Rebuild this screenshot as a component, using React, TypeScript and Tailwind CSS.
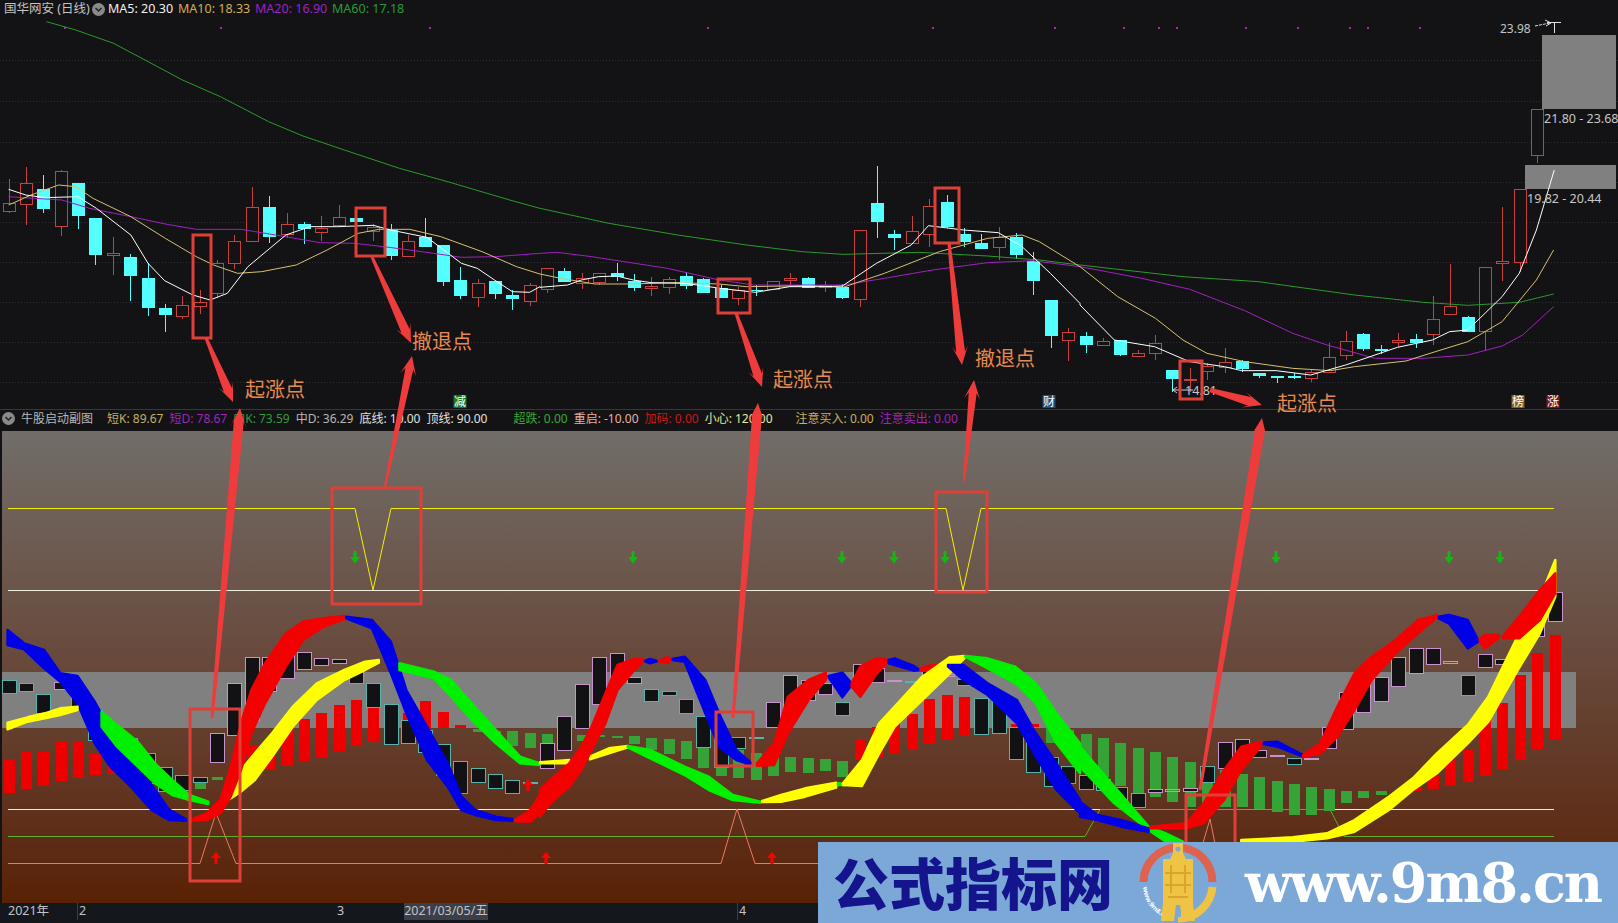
import React from "react";

type Pt = [number, number];
type Rib = [number, number, number];

// crop coordinates -> page coordinates, the three read-outs of the chart
const cropA = (x: number, y: number): Pt => [x / 2.904, y / 3];
const cropB = (x: number, y: number): Pt => [540 + x / 2.904, y / 3];
const cropC = (x: number, y: number): Pt => [1080 + x / 2.914, y / 3];
const lowA = (x: number, y: number): Pt => [x / 2.904, 600 + y / 3];
const lowB = (x: number, y: number): Pt => [540 + x / 2.904, 600 + y / 3];
const lowC = (x: number, y: number): Pt => [1080 + x / 2.914, 540 + y / 3];

const cx = (i: number) => Math.round(8.6 + 17.37 * i) + 0.5;

const line3 = (a: number[][], b: number[][], c: number[][]) =>
  [...a.map((p) => cropA(p[0], p[1])), ...b.map((p) => cropB(p[0], p[1])), ...c.map((p) => cropC(p[0], p[1]))]
    .map((p) => p.join(","))
    .join(" ");

const ma60 = line3(
  [[135, 65], [220, 90], [330, 130], [430, 185], [530, 240], [640, 290], [780, 365], [880, 408], [1000, 450], [1160, 505], [1300, 545], [1480, 600], [1568, 625]],
  [[0, 625], [200, 670], [400, 705], [600, 735], [760, 755], [880, 763], [1100, 757], [1300, 768], [1450, 780], [1568, 795]],
  [[0, 795], [300, 830], [520, 845], [800, 885], [1000, 907], [1130, 916], [1280, 907], [1380, 882]]
);
const ma20 = line3(
  [[25, 590], [100, 595], [180, 600], [260, 625], [380, 650], [480, 672], [570, 688], [700, 688], [800, 705], [930, 728], [1030, 730], [1130, 742], [1260, 760], [1340, 772], [1440, 770], [1568, 760]],
  [[0, 760], [50, 757], [150, 770], [370, 805], [520, 840], [620, 855], [880, 855], [1000, 835], [1140, 810], [1300, 788], [1430, 782], [1568, 800]],
  [[0, 800], [180, 835], [320, 868], [480, 932], [620, 1000], [720, 1035], [860, 1075], [1000, 1075], [1130, 1065], [1230, 1038], [1290, 1005], [1380, 920]]
);
const ma10 = line3(
  [[25, 615], [90, 585], [170, 555], [220, 560], [270, 595], [380, 650], [480, 715], [570, 770], [620, 795], [690, 820], [760, 815], [860, 795], [950, 750], [1040, 700], [1100, 688], [1190, 688], [1280, 710], [1400, 755], [1500, 800], [1568, 822]],
  [[0, 822], [60, 835], [160, 852], [250, 852], [400, 848], [520, 852], [600, 860], [780, 857], [880, 862], [1000, 820], [1160, 755], [1300, 715], [1400, 705], [1450, 725], [1568, 800]],
  [[0, 800], [110, 890], [220, 955], [300, 1020], [370, 1060], [480, 1085], [620, 1105], [730, 1112], [800, 1100], [950, 1083], [1020, 1060], [1130, 1025], [1230, 965], [1330, 840], [1380, 750]]
);
const ma5 = line3(
  [[25, 568], [75, 585], [130, 593], [226, 590], [280, 625], [380, 705], [430, 790], [478, 842], [560, 885], [610, 900], [660, 880], [720, 800], [830, 705], [900, 680], [980, 680], [1084, 676], [1134, 690], [1240, 712], [1340, 790], [1386, 805], [1436, 840], [1488, 875], [1538, 877], [1568, 860]],
  [[0, 862], [80, 855], [120, 840], [170, 830], [222, 828], [271, 840], [323, 848], [423, 850], [524, 865], [625, 877], [725, 860], [826, 860], [878, 858], [977, 790], [1078, 735], [1128, 677], [1230, 690], [1331, 698], [1400, 740], [1482, 820], [1568, 910]],
  [[0, 915], [100, 1020], [217, 1040], [319, 1085], [421, 1100], [471, 1112], [572, 1112], [672, 1125], [774, 1095], [925, 1042], [1027, 1020], [1077, 995], [1130, 990], [1230, 890], [1280, 820], [1330, 690], [1382, 510]]
);

// hi, body top, body bottom, lo, 1 = red
const candles: number[][] = [
  [179, 203, 211, 213, 1], [167, 183, 204, 225, 1], [175, 189, 209, 213, 0], [170, 171, 226, 236, 1], [183, 183, 216, 229, 0],
  [218, 218, 255, 265, 0], [237, 253, 255, 275, 1], [254, 257, 276, 301, 0], [263, 278, 308, 316, 0], [304, 308, 315, 332, 0],
  [296, 305, 316, 319, 1], [290, 302, 306, 314, 1], [260, 263, 293, 298, 1], [235, 241, 263, 269, 1], [187, 207, 241, 241, 1],
  [196, 207, 237, 243, 0], [213, 224, 234, 238, 1], [222, 224, 229, 244, 0], [216, 228, 232, 241, 1], [205, 217, 225, 225, 1],
  [217, 218, 222, 222, 0], [224, 227, 231, 241, 1], [224, 230, 256, 260, 0], [235, 241, 256, 256, 1], [218, 237, 247, 247, 0],
  [245, 245, 282, 286, 0], [267, 280, 296, 299, 0], [279, 283, 297, 307, 1], [281, 281, 294, 299, 0], [290, 295, 299, 310, 0],
  [283, 285, 301, 306, 1], [268, 268, 289, 293, 1], [268, 271, 282, 282, 0], [273, 278, 283, 289, 1], [273, 273, 282, 285, 1],
  [263, 273, 277, 281, 0], [274, 281, 288, 291, 0], [277, 286, 288, 296, 1], [277, 279, 287, 294, 1], [272, 276, 286, 289, 0],
  [278, 279, 293, 293, 0], [285, 288, 298, 298, 0], [287, 290, 298, 305, 1], [285, 290, 291, 296, 0], [281, 281, 289, 289, 1],
  [273, 278, 280, 286, 1], [277, 278, 288, 288, 0], [281, 285, 287, 292, 1], [284, 287, 298, 299, 0], [230, 230, 299, 307, 1],
  [166, 203, 222, 238, 0], [230, 234, 238, 250, 0], [216, 231, 243, 243, 1], [199, 206, 234, 247, 1], [195, 202, 227, 228, 0],
  [228, 234, 242, 247, 0], [234, 243, 249, 249, 0], [227, 237, 247, 260, 1], [233, 237, 255, 259, 0], [252, 261, 281, 295, 0],
  [300, 300, 336, 348, 0], [328, 332, 340, 361, 1], [332, 336, 345, 353, 0], [338, 341, 345, 345, 1], [340, 340, 355, 356, 0],
  [350, 353, 356, 356, 1], [335, 343, 353, 360, 1], [370, 370, 379, 392, 0], [368, 379, 380, 392, 1], [363, 366, 371, 380, 1],
  [348, 362, 367, 373, 1], [360, 361, 369, 372, 0], [373, 373, 376, 378, 0], [376, 376, 378, 383, 0], [373, 376, 378, 379, 0],
  [369, 372, 378, 382, 1], [343, 357, 372, 372, 1], [331, 341, 355, 360, 1], [333, 334, 349, 351, 0], [345, 349, 351, 354, 0],
  [333, 340, 342, 347, 1], [334, 339, 343, 348, 0], [296, 319, 334, 345, 1], [264, 306, 314, 314, 1], [316, 317, 332, 332, 0],
  [267, 267, 331, 351, 1], [207, 261, 263, 281, 1], [189, 189, 262, 272, 1], [109, 109, 155, 163, 1],
];

const gridY = [60, 101, 142, 182, 222, 262, 302, 342, 382];
const dots = [64, 220, 429, 707, 932, 1054, 1123, 1158, 1176, 1245, 1297, 1349, 1367, 1419];

// index, top, bottom, 1 = pink
const subCandles: number[][] = [
  [0, 680, 693, 0], [1, 683, 691, 0], [2, 694, 713, 0], [3, 682, 689, 1], [4, 695, 707, 0], [5, 710, 740, 0], [6, 730, 747, 0], [7, 738, 764, 0],
  [8, 753, 783, 0], [9, 767, 791, 0], [10, 775, 790, 0], [11, 777, 782, 0], [12, 733, 762, 1], [13, 683, 735, 1], [14, 657, 720, 1], [15, 657, 691, 1],
  [16, 652, 678, 1], [17, 652, 669, 1], [18, 658, 665, 1], [19, 659, 663, 1], [20, 671, 683, 0], [21, 683, 707, 0], [22, 704, 744, 0], [23, 720, 743, 0],
  [24, 730, 752, 0], [25, 744, 775, 0], [26, 761, 793, 0], [27, 768, 782, 0], [28, 774, 788, 0], [29, 780, 793, 0], [30, 782, 783, 0], [31, 743, 768, 1],
  [32, 716, 750, 1], [33, 684, 728, 1], [34, 657, 704, 1], [35, 653, 680, 1], [36, 677, 683, 1], [37, 689, 701, 0], [38, 691, 695, 0], [39, 699, 713, 0],
  [40, 716, 747, 0], [41, 733, 767, 0], [42, 737, 748, 0], [43, 737, 738, 0], [44, 702, 727, 1], [45, 675, 707, 1], [46, 680, 700, 1], [47, 683, 694, 1],
  [48, 702, 715, 0], [49, 664, 688, 1], [50, 668, 682, 1], [51, 680, 681, 1], [52, 681, 682, 0], [53, 669, 675, 1], [54, 674, 676, 1], [55, 679, 685, 0],
  [56, 698, 734, 0], [57, 701, 733, 0], [58, 727, 759, 0], [59, 742, 772, 0], [60, 757, 786, 0], [61, 766, 783, 0], [62, 775, 789, 0], [63, 779, 790, 0],
  [64, 787, 802, 0], [65, 793, 807, 0], [66, 789, 792, 1], [67, 789, 791, 1], [68, 788, 791, 1], [69, 766, 782, 0], [70, 742, 768, 1], [71, 739, 757, 1],
  [72, 750, 757, 1], [73, 755, 756, 1], [74, 758, 764, 0], [75, 758, 759, 1], [76, 727, 748, 1], [77, 692, 729, 1], [78, 681, 712, 1], [79, 677, 701, 1],
  [80, 657, 686, 1], [81, 648, 673, 1], [82, 648, 664, 1], [83, 661, 663, 1], [84, 675, 695, 0], [85, 654, 667, 1], [86, 659, 664, 1], [88, 615, 636, 1], [89, 592, 621, 1],
];

const redBars: number[][] = [
  [0, 759, 793], [1, 751, 789], [2, 751, 786], [3, 741, 781], [4, 742, 778], [5, 754, 775], [6, 763, 774], [7, 767, 773], [14, 745, 770], [15, 750, 770],
  [16, 727, 766], [17, 719, 761], [18, 713, 757], [19, 705, 751], [20, 700, 746], [21, 698, 742], [22, 706, 738], [23, 713, 735], [24, 701, 732], [25, 712, 728], [26, 725, 728],
  [49, 740, 760], [50, 727, 757], [51, 722, 753], [52, 714, 749], [53, 699, 744], [54, 695, 740], [55, 697, 736], [56, 703, 732], [57, 702, 729], [58, 724, 727], [59, 724, 727],
  [81, 787, 791], [82, 776, 789], [83, 760, 786], [84, 750, 782], [85, 720, 776], [86, 703, 769], [87, 675, 760], [88, 653, 749], [89, 635, 739],
];
const greenBars: number[][] = [
  [8, 773, 780], [9, 775, 782], [10, 776, 789], [11, 778, 789], [12, 777, 780], [27, 729, 732], [28, 731, 740], [29, 731, 746], [30, 733, 748],
  [31, 734, 743], [32, 735, 743], [33, 735, 741], [34, 735, 737], [35, 736, 738], [36, 736, 744], [37, 738, 750], [38, 739, 754], [39, 741, 759], [40, 744, 768],
  [41, 750, 776], [42, 750, 778], [43, 753, 780], [44, 755, 776], [45, 757, 772], [46, 758, 773], [47, 759, 771], [48, 761, 777], [60, 728, 743], [61, 730, 745],
  [62, 734, 770], [63, 738, 777], [64, 743, 786], [65, 748, 793], [66, 752, 797], [67, 757, 802], [68, 762, 807], [69, 766, 805], [70, 770, 807], [71, 774, 807],
  [72, 777, 809], [73, 781, 812], [74, 784, 815], [75, 787, 815], [76, 789, 811], [77, 791, 803], [78, 791, 798], [79, 791, 795],
];

const rib = (conv: (x: number, y: number) => Pt, pts: Rib[]) =>
  [...pts.map((p) => conv(p[0], p[1])), ...[...pts].reverse().map((p) => conv(p[0], p[2]))].map((p) => p.join(",")).join(" ");

const BLUE = "#0000e6";
const RED = "#f50000";
const GREEN = "#00f000";
const YELLOW = "#ffff00";

const ribbons: [string, string][] = [
  [BLUE, rib(lowA, [[22, 90, 135], [70, 130, 148], [128, 150, 205], [175, 220, 245], [225, 228, 310], [275, 305, 430], [320, 390, 500], [380, 480, 560], [440, 555, 630], [490, 628, 660], [540, 658, 662]])],
  [GREEN, rib(lowA, [[295, 335, 380], [340, 375, 440], [400, 425, 500], [450, 490, 550], [500, 540, 585], [550, 585, 600], [605, 605, 612]])],
  [YELLOW, rib(lowA, [[22, 368, 388], [80, 352, 365], [130, 340, 355], [175, 325, 345], [225, 320, 330]])],
  [YELLOW, rib(lowA, [[665, 590, 598], [700, 510, 575], [740, 460, 540], [790, 400, 470], [850, 320, 380], [920, 250, 300], [1000, 210, 240], [1060, 185, 210], [1100, 180, 188]])],
  [RED, rib(lowA, [[555, 658, 662], [600, 640, 660], [640, 600, 640], [670, 500, 590], [700, 370, 510], [730, 270, 400], [770, 190, 310], [830, 100, 200], [880, 65, 120], [940, 55, 80], [1000, 48, 58]])],
  [BLUE, rib(lowA, [[1005, 50, 55], [1080, 60, 85], [1135, 125, 220], [1180, 270, 340], [1240, 380, 480], [1300, 490, 560], [1340, 590, 630], [1380, 630, 645], [1440, 650, 660], [1490, 658, 662]])],
  [GREEN, rib(lowA, [[1160, 190, 210], [1260, 215, 235], [1310, 240, 290], [1370, 310, 360], [1440, 390, 430], [1510, 470, 490], [1568, 490, 495]])],
  [RED, rib(lowA, [[1495, 660, 664], [1540, 630, 665], [1568, 585, 640]])],
  [YELLOW, rib(lowB, [[0, 487, 490], [85, 480, 490]])],
  [YELLOW, rib(lowB, [[145, 470, 478], [200, 445, 460], [255, 438, 442]])],
  [RED, rib(lowB, [[0, 570, 650], [30, 540, 610], [85, 490, 560], [120, 440, 510], [150, 380, 450], [190, 280, 370], [225, 195, 270], [270, 178, 215], [300, 178, 185]])],
  [BLUE, rib(lowB, [[305, 183, 184], [320, 177, 190], [340, 183, 184]])],
  [RED, rib(lowB, [[345, 183, 184], [370, 172, 188], [382, 176, 180]])],
  [BLUE, rib(lowB, [[385, 177, 180], [420, 170, 185], [480, 240, 340], [520, 340, 440], [570, 450, 480], [615, 490, 495]])],
  [GREEN, rib(lowB, [[255, 438, 442], [320, 450, 475], [420, 500, 525], [490, 530, 570], [560, 585, 600], [640, 605, 608]])],
  [YELLOW, rib(lowB, [[645, 603, 606], [700, 585, 605], [770, 565, 590], [860, 548, 563]])],
  [GREEN, rib(lowB, [[865, 550, 555], [885, 552, 555]])],
  [RED, rib(lowB, [[630, 490, 497], [680, 430, 495], [720, 290, 400], [780, 240, 300], [830, 218, 240]])],
  [BLUE, rib(lowB, [[838, 228, 232], [878, 218, 292], [905, 250, 255]])],
  [RED, rib(lowB, [[905, 250, 260], [930, 200, 290], [975, 175, 225], [1005, 178, 190]])],
  [BLUE, rib(lowB, [[1012, 180, 190], [1030, 175, 195], [1085, 198, 212], [1100, 208, 210]])],
  [RED, rib(lowB, [[1105, 205, 212], [1140, 195, 212], [1175, 195, 205]])],
  [YELLOW, rib(lowB, [[880, 550, 555], [935, 480, 558], [985, 370, 460], [1030, 320, 380], [1110, 230, 300], [1190, 172, 220], [1232, 168, 175]])],
  [GREEN, rib(lowB, [[1235, 168, 170], [1300, 175, 205], [1380, 200, 250], [1440, 250, 310], [1500, 340, 430], [1568, 430, 520]])],
  [BLUE, rib(lowB, [[1185, 195, 200], [1230, 195, 240], [1300, 250, 285], [1385, 300, 370], [1440, 400, 470], [1500, 490, 570], [1568, 600, 640]])],
  [GREEN, rib(lowC, [[0, 620, 680], [100, 740, 790], [200, 860, 870], [250, 880, 905], [300, 905, 910]])],
  [BLUE, rib(lowC, [[0, 785, 830], [50, 825, 840], [120, 840, 860], [200, 865, 875]])],
  [RED, rib(lowC, [[205, 860, 865], [310, 850, 865], [360, 790, 850], [420, 690, 780], [470, 620, 690], [530, 605, 615]])],
  [BLUE, rib(lowC, [[535, 608, 612], [575, 605, 620], [650, 645, 650]])],
  [RED, rib(lowC, [[650, 645, 652], [700, 610, 640], [750, 500, 590], [800, 400, 510], [850, 350, 420], [920, 300, 340], [985, 240, 280], [1040, 226, 232]])],
  [BLUE, rib(lowC, [[1045, 230, 235], [1075, 225, 250], [1130, 240, 325], [1160, 300, 305]])],
  [RED, rib(lowC, [[1165, 295, 305], [1180, 285, 325], [1220, 285, 295]])],
  [YELLOW, rib(lowC, [[470, 900, 905], [620, 892, 905], [720, 880, 895], [800, 840, 875], [900, 770, 810], [970, 715, 750], [1040, 640, 700], [1130, 555, 610], [1190, 470, 545], [1270, 300, 400], [1340, 175, 280], [1385, 60, 170]])],
  [RED, rib(lowC, [[1232, 290, 295], [1280, 230, 295], [1340, 150, 240], [1385, 100, 160]])],
];

const greenArrows = [355, 633, 842, 894, 945, 1276, 1449, 1500];
const redArrows: Pt[] = [[216, 858], [528, 785], [546, 858], [772, 858]];

// box x, y, w, h
const boxes = [
  [193, 235, 18, 103], [356, 208, 29, 48], [718, 279, 32, 34], [935, 188, 24, 55], [1180, 361, 22, 38],
  [190, 709, 50, 172], [332, 488, 89, 116], [936, 492, 51, 100], [716, 712, 37, 54], [1186, 795, 49, 60],
];

function arrow(x1: number, y1: number, x2: number, y2: number, w0: number, w1: number) {
  const len = Math.hypot(x2 - x1, y2 - y1);
  const ux = (x2 - x1) / len;
  const uy = (y2 - y1) / len;
  const at = (back: number, side: number): string => `${x2 - ux * back - uy * side},${y2 - uy * back + ux * side}`;
  const base = (side: number): string => `${x1 - uy * side},${y1 + ux * side}`;
  return [base(-w0 / 2), at(13, -w1 / 2), at(19, -8), at(0, 0), at(19, 8), at(13, w1 / 2), base(w0 / 2)].join(" ");
}

const arrows: number[][] = [
  [206, 338, 233, 402, 3, 9], [212, 718, 240, 408, 3, 10], [372, 257, 411, 343, 3, 9], [385, 487, 412, 356, 2, 8], [736, 313, 762, 387, 3, 9],
  [733, 718, 758, 403, 3, 10], [949, 243, 962, 365, 3, 9], [964, 481, 974, 380, 2, 8], [1210, 390, 1262, 405, 4, 9], [1200, 790, 1262, 418, 3, 10],
];

const labels: [string, number, number][] = [
  ["起涨点", 245, 397], ["撤退点", 412, 349], ["起涨点", 773, 387], ["撤退点", 975, 366], ["起涨点", 1277, 411],
];

const tags: [string, number, string][] = [
  ["减", 460, "#0f7a2a"], ["财", 1049, "#1d4d80"], ["榜", 1518, "#8a5c22"], ["涨", 1553, "#7a1420"],
];

function Chevron() {
  return (
    <span className="flex h-[13px] w-[13px] items-center justify-center rounded-full bg-[#8a8a8a]">
      <svg width="9" height="9" viewBox="0 0 9 9" fill="none" stroke="#222" strokeWidth="1.5">
        <path d="M1.5 3 4.5 6 7.5 3" />
      </svg>
    </span>
  );
}

function MainChart() {
  return (
    <svg className="block h-[391px] w-[1618px]" viewBox="0 18 1618 391">
      {gridY.map((y) => (
        <line key={y} x1="0" x2="1618" y1={y + 0.5} y2={y + 0.5} stroke="#2e2e34" strokeDasharray="1 2" />
      ))}
      {dots.map((x) => (
        <rect key={x} x={x} y="27" width="2" height="2" fill="#a030a0" />
      ))}
      <rect x="1542" y="35" width="74" height="74" fill="#808080" />
      <rect x="1525" y="165" width="91" height="24" fill="#808080" />
      {candles.map(([hi, top, bot, lo, up], i) => {
        const x = cx(i);
        const color = up ? "#c8403f" : "#54ffff";
        return (
          <g key={i}>
            <line x1={x} x2={x} y1={hi} y2={top} stroke={color} />
            <line x1={x} x2={x} y1={bot} y2={lo} stroke={color} />
            {up ? (
              <rect x={x - 6} y={top + 0.5} width="12" height={bot - top} fill="#131315" stroke={color} />
            ) : (
              <rect x={x - 6.5} y={top} width="13" height={bot - top} fill={color} />
            )}
          </g>
        );
      })}
      <polyline points={ma60} fill="none" stroke="#2a9a2a" />
      <polyline points={ma20} fill="none" stroke="#a020c0" />
      <polyline points={ma10} fill="none" stroke="#d8c070" />
      <polyline points={ma5} fill="none" stroke="#ffffff" />
      <path d="M1547 22.5H1561M1554.5 22V33" stroke="#e0e0e0" fill="none" />
      <path d="M1535 26 1550 23" stroke="#e0e0e0" strokeDasharray="3 1" fill="none" />
      <path d="M1545 20 1551 23 1546 26" stroke="#e0e0e0" fill="none" />
      <path d="M1193 390H1174M1177 387 1173 390 1177 393" stroke="#d0d0d0" fill="none" />
      <text x="1500" y="33" fontSize="12" fill="#c4c4c4">23.98</text>
      <text x="1544" y="123" fontSize="12.5" fill="#c8c8c8">21.80 - 23.68</text>
      <text x="1527" y="203" fontSize="12.5" fill="#c8c8c8">19.82 - 20.44</text>
      <text x="1185" y="395" fontSize="12.5" fill="#c8c8c8">14.81</text>
      {tags.map(([t, x, bg]) => (
        <g key={t}>
          <rect x={x - 6.5} y="395" width="13" height="13" fill={bg} />
          <text x={x} y="406" fontSize="12" fill="#ffffff" textAnchor="middle">{t}</text>
        </g>
      ))}
      <path d="M1588 3 1594 9 1588 15 1582 9Z" fill="none" stroke="#6a6a6a" />
      <rect x="1602" y="4" width="11" height="10" rx="1" fill="none" stroke="#6a6a6a" />
      <rect x="1608" y="5" width="4" height="8" fill="#6a6a6a" />
    </svg>
  );
}

function SubChart() {
  return (
    <svg className="block h-[472px] w-[1616px]" viewBox="2 431 1616 472">
      <rect x="2" y="672" width="1574" height="56" fill="#808080" />
      <path d="M8 508.5H355L373 590 391 508.5H946L963 590 981 508.5H1554" fill="none" stroke="#f4f000" />
      <line x1="8" x2="1554" y1="590.5" y2="590.5" stroke="#f0f0e0" />
      <line x1="8" x2="1102" y1="809.5" y2="809.5" stroke="#f0f0f0" />
      <line x1="1335" x2="1554" y1="809.5" y2="809.5" stroke="#f0f0f0" />
      <path d="M8 836.5H1085L1100 809.5H1330L1344 836.5H1554" fill="none" stroke="#5fae2a" />
      <path d="M8 863.5H200L216 813 236 863.5H721L737 809 755 863.5H1197L1210 819 1219 863.5" fill="none" stroke="#ea7b60" />
      {redBars.map(([i, t, b]) => (
        <rect key={i} x={cx(i) - 5.5} y={t} width="11" height={b - t} fill="#ef0000" />
      ))}
      {greenBars.map(([i, t, b]) => (
        <rect key={i} x={cx(i) - 5.5} y={t} width="11" height={b - t} fill="#36a338" />
      ))}
      {subCandles.map(([i, t, b, up]) => (
        <rect key={i} x={cx(i) - 7} y={t + 0.5} width="14" height={b - t} fill={b - t > 2 ? "#121214" : "none"} stroke={up ? "#c892cc" : "#56b4ac"} />
      ))}
      {ribbons.map(([c, p], i) => (
        <polygon key={i} points={p} fill={c} stroke={c} strokeWidth="2.5" strokeLinejoin="round" />
      ))}
      {greenArrows.map((x) => (
        <path key={x} d={`M${x - 1.5} 551h3v6h3.5l-5 6.5-5-6.5h3.5z`} fill="#10b810" />
      ))}
      {redArrows.map(([x, y]) => (
        <path key={x} d={`M${x} ${y - 6}l5 6h-3.5v6h-3v-6h-3.5z`} fill="#ff0000" />
      ))}
    </svg>
  );
}

function Logo() {
  return (
    <svg className="shrink-0" width="80" height="80" viewBox="0 0 80 80">
      <path d="M5.5 39A34.5 34.5 0 0 1 74.5 39" fill="none" stroke="#dd6350" strokeWidth="8" />
      <path d="M74.5 44A34.5 34.5 0 0 1 40 75.5" fill="none" stroke="#efc344" strokeWidth="8" />
      <path id="logo-arc" d="M5 44A35 35 0 0 0 32 76" fill="none" />
      <text fontSize="6.5" fontWeight="700" fill="#ffffff">
        <textPath href="#logo-arc">www.9m8.cn</textPath>
      </text>
      <path d="M35 0H45V10L48 16H55V60L57 78H44L42 62H38L36 78H23L25 60V16H32L35 10Z" fill="#efc344" />
      <circle cx="40" cy="6" r="2.5" fill="#7ca8d8" />
      <path d="M38 66H42L43 74H37Z" fill="#7ca8d8" />
      <path d="M27 30H53M27 42H53M33 22V50M47 22V50M30 54H50" fill="none" stroke="#d8a52e" strokeWidth="2" />
    </svg>
  );
}

export default function App() {
  return (
    <div className="relative flex h-[923px] w-[1618px] flex-col overflow-hidden bg-[#131315] font-['Noto_Sans','Noto_Sans_CJK_SC',sans-serif]">
      <div className="border-b border-[#38383c]">
        <div className="flex h-[18px] items-center pl-[4px] text-[12.5px] leading-none">
          <span className="w-[88px] text-[#c4c4c4]">国华网安 (日线)</span>
          <Chevron />
          <span className="ml-[3px] w-[70px] text-[#f0f0f0]">MA5: 20.30</span>
          <span className="w-[77px] text-[#d0b050]">MA10: 18.33</span>
          <span className="w-[77px] text-[#a020c0]">MA20: 16.90</span>
          <span className="text-[#2a9a3a]">MA60: 17.18</span>
        </div>
        <MainChart />
      </div>

      <div className="flex h-[21px] items-center gap-[6px] pb-[4px] pl-[2px] text-[12px] leading-none">
        <Chevron />
        <span className="mr-[8px] text-[#b8b8b8]">牛股启动副图</span>
        <span className="text-[#c8b060]">短K: 89.67</span>
        <span className="text-[#a024b8]">短D: 78.67</span>
        <span className="text-[#2f9e3c]">中K: 73.59</span>
        <span className="text-[#b8b8b8]">中D: 36.29</span>
        <span className="text-[#e0e0e0]">底线: 10.00</span>
        <span className="text-[#e0e0e0]">顶线: 90.00</span>
        <span className="ml-[20px] text-[#38a838]">超跌: 0.00</span>
        <span className="text-[#e8b0a0]">重启: -10.00</span>
        <span className="text-[#c81818]">加码: 0.00</span>
        <span className="text-[#e8e8a0]">小心: 120.00</span>
        <span className="ml-[17px] text-[#c8b060]">注意买入: 0.00</span>
        <span className="text-[#a024b8]">注意卖出: 0.00</span>
      </div>

      <div className="h-[472px] pl-[2px]">
        <div className="h-full bg-linear-to-b from-[#716d69] to-[#592104]">
          <SubChart />
        </div>
      </div>

      <div className="flex h-[17px] items-center bg-[#14171c] text-[12.5px] leading-none text-[#c4c4c4]">
        <span className="ml-[8px] w-[69px]">2021年</span>
        <span className="flex h-full w-[260px] items-center border-l border-[#3a3f4a] pl-px">2</span>
        <span className="w-[67px]">3</span>
        <span className="flex h-full w-[84px] items-center justify-center bg-[#3a3f4a]">2021/03/05/五</span>
        <span className="ml-[249px] flex h-full items-center border-l border-[#3a3f4a] pl-px">4</span>
      </div>
      <div className="h-[3px] bg-[#14171c]" />

      <svg className="pointer-events-none absolute left-0 top-0 h-[923px] w-[1618px]" viewBox="0 0 1618 923">
        {boxes.map(([x, y, w, h]) => (
          <rect key={`${x}-${y}`} x={x} y={y} width={w} height={h} fill="none" stroke="#de4038" strokeWidth="3" />
        ))}
        {arrows.map((a, i) => (
          <polygon key={i} points={arrow(a[0], a[1], a[2], a[3], a[4], a[5])} fill="#ee3c3c" />
        ))}
        {labels.map(([t, x, y]) => (
          <text key={x} x={x} y={y} fontSize="20" fill="#e8894e">{t}</text>
        ))}
      </svg>

      <div className="absolute bottom-0 left-[818px] right-0 flex h-[81px] items-center bg-[#7ca8d8]">
        <span className="ml-[15px] w-[305px] text-[56px] font-black leading-none text-[#14148c]">公式指标网</span>
        <Logo />
        <span className="ml-[27px] font-['DejaVu_Serif',serif] text-[54px] font-bold leading-none tracking-[-2px] text-white">www.9m8.cn</span>
      </div>
    </div>
  );
}
